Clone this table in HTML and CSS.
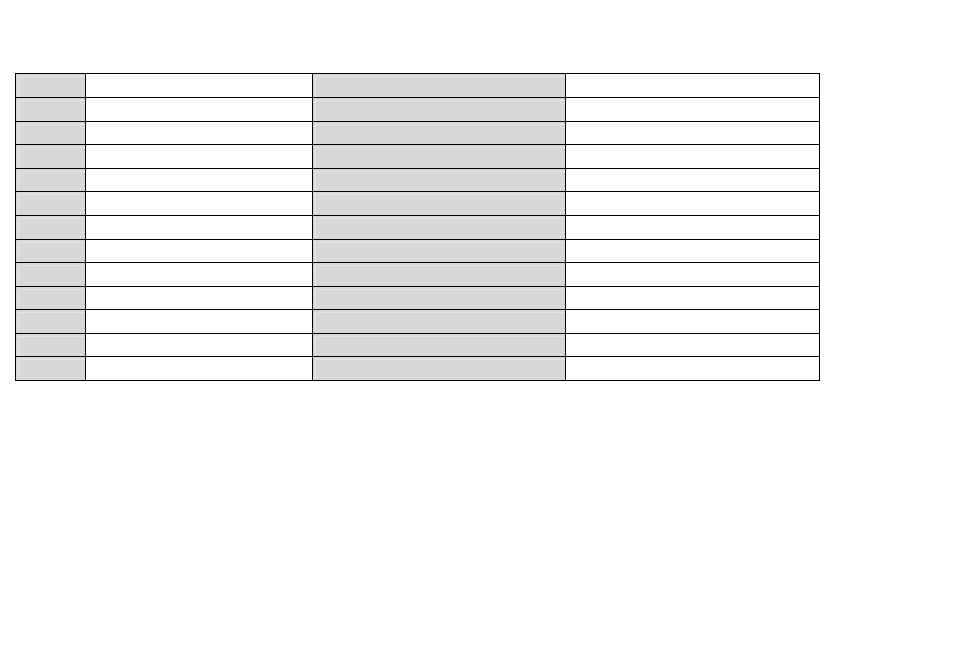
FILE: index.html
```html
<!DOCTYPE html>
<html>
<head>
<meta charset="utf-8">
<link rel="stylesheet" href="styles.css">
</head>
<body>
<table class="grid">
<colgroup><col class="c1"><col class="c2"><col class="c3"><col class="c4"></colgroup>
<tbody>
<tr><td class="g"></td><td></td><td class="g"></td><td></td></tr>
<tr><td class="g"></td><td></td><td class="g"></td><td></td></tr>
<tr class="s"><td class="g"></td><td></td><td class="g"></td><td></td></tr>
<tr><td class="g"></td><td></td><td class="g"></td><td></td></tr>
<tr class="s"><td class="g"></td><td></td><td class="g"></td><td></td></tr>
<tr><td class="g"></td><td></td><td class="g"></td><td></td></tr>
<tr><td class="g"></td><td></td><td class="g"></td><td></td></tr>
<tr class="s"><td class="g"></td><td></td><td class="g"></td><td></td></tr>
<tr><td class="g"></td><td></td><td class="g"></td><td></td></tr>
<tr class="s"><td class="g"></td><td></td><td class="g"></td><td></td></tr>
<tr><td class="g"></td><td></td><td class="g"></td><td></td></tr>
<tr class="s"><td class="g"></td><td></td><td class="g"></td><td></td></tr>
<tr><td class="g"></td><td></td><td class="g"></td><td></td></tr>
</tbody>
</table>
</body>
</html>
```
FILE: styles.css
```css
html, body {
  margin: 0;
  padding: 0;
  background: #ffffff;
  font-family: "Liberation Sans", Arial, sans-serif;
}
body {
  padding: 73px 0 0 15px;
}
.grid {
  border-collapse: collapse;
  table-layout: fixed;
  width: 804px;
}
.c1 { width: 70px; }
.c2 { width: 227px; }
.c3 { width: 253px; }
.c4 { width: 254px; }
.grid tr { height: 24px; }
.grid tr.s { height: 23px; }
.grid td {
  border: 1px solid #000000;
  padding: 0;
}
.grid td.g {
  background: #d8d8d8;
  box-shadow: inset 1px 1px 0 1px #d8d8d8, inset 2px 2px 0 1px #e4e4e4;
}
```
